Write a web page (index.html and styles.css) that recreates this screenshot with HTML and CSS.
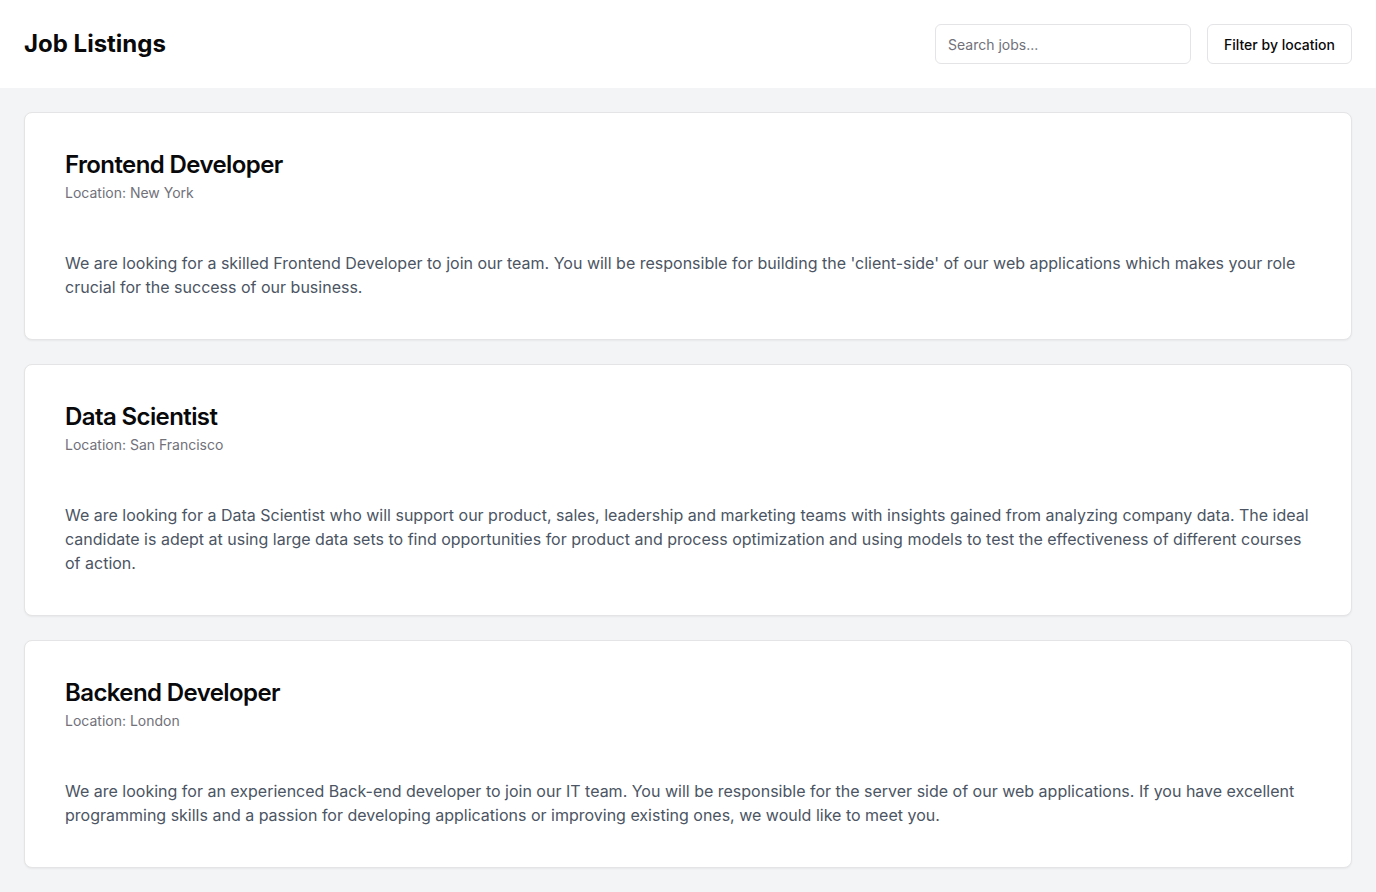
FILE: index.html
```html
<!DOCTYPE html>
<html lang="en">
<head>
<meta charset="utf-8">
<title>Job Listings</title>
<link rel="stylesheet" href="styles.css">
</head>
<body>
<header class="topbar">
  <h1 class="brand">Job Listings</h1>
  <div class="controls">
    <input class="search" type="text" placeholder="Search jobs...">
    <button class="btn">Filter by location</button>
  </div>
</header>
<main class="list">
  <article class="card">
    <div class="card-header">
      <h2 class="card-title">Frontend Developer</h2>
      <p class="card-desc">Location: New York</p>
    </div>
    <div class="card-content">
      <p>We are looking for a skilled Frontend Developer to join our team. You will be responsible for building the 'client-side' of our web applications which makes your role crucial for the success of our business.</p>
    </div>
  </article>
  <article class="card">
    <div class="card-header">
      <h2 class="card-title">Data Scientist</h2>
      <p class="card-desc">Location: San Francisco</p>
    </div>
    <div class="card-content">
      <p>We are looking for a Data Scientist who will support our product, sales, leadership and marketing teams with insights gained from analyzing company data. The ideal candidate is adept at using large data sets to find opportunities for product and process optimization and using models to test the effectiveness of different courses of action.</p>
    </div>
  </article>
  <article class="card">
    <div class="card-header">
      <h2 class="card-title">Backend Developer</h2>
      <p class="card-desc">Location: London</p>
    </div>
    <div class="card-content">
      <p>We are looking for an experienced Back-end developer to join our IT team. You will be responsible for the server side of our web applications. If you have excellent programming skills and a passion for developing applications or improving existing ones, we would like to meet you.</p>
    </div>
  </article>
</main>
</body>
</html>
```

FILE: styles.css
```css
* { box-sizing: border-box; }
html, body { margin: 0; padding: 0; }
body {
  font-family: Inter, "Noto Sans", sans-serif;
  color: #09090b;
  background: #f3f4f6;
  min-height: 100vh;
}
.topbar {
  background: #ffffff;
  padding: 24px;
  display: flex;
  align-items: center;
  justify-content: space-between;
}
.brand {
  margin: 0;
  font-size: 24px;
  line-height: 32px;
  font-weight: 700;
}
.controls {
  display: flex;
  align-items: center;
  gap: 16px;
}
.search {
  width: 256px;
  height: 40px;
  border: 1px solid #e4e4e7;
  border-radius: 6px;
  padding: 8px 12px;
  font-family: inherit;
  font-size: 14px;
  color: #09090b;
  background: #fff;
  outline: none;
}
.search::placeholder { color: #71717a; }
.btn {
  height: 40px;
  padding: 0 16px;
  border: 1px solid #e4e4e7;
  border-radius: 6px;
  background: #fff;
  font-family: inherit;
  font-size: 14px;
  font-weight: 500;
  color: #09090b;
}
.list {
  padding: 24px;
  display: flex;
  flex-direction: column;
  gap: 24px;
}
.card {
  background: #fff;
  border: 1px solid #e4e4e7;
  border-radius: 8px;
  box-shadow: 0 1px 2px 0 rgba(0,0,0,0.05);
  padding: 16px;
}
.card-header {
  padding: 24px;
  display: flex;
  flex-direction: column;
  gap: 6px;
}
.card-title {
  margin: 0;
  font-size: 24px;
  line-height: 1;
  font-weight: 600;
  letter-spacing: -0.025em;
}
.card-desc {
  margin: 0;
  font-size: 14px;
  line-height: 20px;
  color: #71717a;
}
.card-content {
  padding: 24px;
}
.card-content p {
  margin: 0;
  font-size: 16px;
  line-height: 24px;
  color: #4b5563;
}
```
